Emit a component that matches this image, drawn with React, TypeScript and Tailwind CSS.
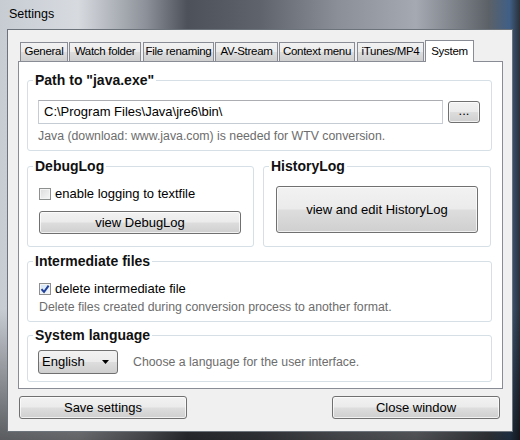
import type { ReactNode } from "react";

const FONT = { fontFamily: '"Liberation Sans", Arial, sans-serif' };

const tabs = [
  { label: "General", width: "w-[48px]", gap: "ml-[2px]" },
  { label: "Watch folder", width: "w-[72px]", gap: "ml-[1px]" },
  { label: "File renaming", width: "w-[71px]", gap: "ml-[2px]" },
  { label: "AV-Stream", width: "w-[63px]", gap: "ml-[1px]" },
  { label: "Context menu", width: "w-[76px]", gap: "ml-[1px]" },
  { label: "iTunes/MP4", width: "w-[67px]", gap: "ml-[2px]" },
];

function GroupBox({
  title,
  className,
  children,
}: {
  title: string;
  className: string;
  children: ReactNode;
}) {
  return (
    <fieldset className={`rounded-[3px] border border-[#d5dfe5] ${className}`}>
      <legend className="ml-[5px] px-[2px] text-[14px] font-bold leading-[16px] text-[#111]">
        {title}
      </legend>
      {children}
    </fieldset>
  );
}

function Button({ className, children }: { className: string; children: ReactNode }) {
  return (
    <button
      type="button"
      className={`flex items-center justify-center rounded-[3px] border border-[#707070] bg-[linear-gradient(180deg,#f2f2f2_0%,#ebebeb_48%,#dddddd_52%,#cfcfcf_100%)] text-[13px] leading-[15px] text-black shadow-[inset_0_0_0_1px_rgba(255,255,255,0.7)] ${className}`}
    >
      {children}
    </button>
  );
}

function CheckBox({ checked }: { checked: boolean }) {
  return (
    <span
      className={`flex h-[12px] w-[12px] items-center justify-center border border-[#8e8f8f] shadow-[inset_0_0_0_1px_#f4f4f4] ${
        checked
          ? "bg-[linear-gradient(135deg,#cfe3f6_0%,#f4f9fe_100%)]"
          : "bg-[linear-gradient(135deg,#dcdcdc_0%,#f6f6f6_100%)]"
      }`}
    >
      {checked ? (
        <svg width="10" height="10" viewBox="0 0 10 10">
          <path d="M1.5 5.2 L4 8 L8.6 1.6" fill="none" stroke="#21409a" strokeWidth="2" />
        </svg>
      ) : null}
    </span>
  );
}

export default function App() {
  return (
    <div
      className="relative h-[440px] w-[520px] overflow-hidden bg-[linear-gradient(180deg,rgba(0,0,0,0)_70%,rgba(0,0,0,0.55)_100%),linear-gradient(90deg,#c7ccd3_0%,#d7dbe0_15%,#8d9199_28%,#4d5159_36%,#5e636c_50%,#8b9098_65%,#a5aab2_80%,#5c6168_94%,#3f5f86_98%,#2a3038_100%)]"
      style={FONT}
    >
      <div className="flex h-[29px] items-center pl-[9px] text-[12.5px] text-black">Settings</div>
      <div className="ml-[7px] h-[403px] w-[506px] border border-[#6d737b] bg-[#f0f0f0]">
        <div className="pl-[10px] pt-[10px]">
          <div className="flex h-[21px] items-end">
            {tabs.map((tab) => (
              <div
                key={tab.label}
                className={`flex h-[19px] items-center justify-center border border-b-0 border-[#898c95] bg-[linear-gradient(180deg,#f2f2f2_0%,#ebebeb_50%,#dddddd_50%,#cfcfcf_100%)] text-[11.5px] tracking-[-0.3px] text-black ${tab.width} ${tab.gap}`}
              >
                {tab.label}
              </div>
            ))}
            <div className="relative z-10 -mb-px ml-[1px] flex h-[22px] w-[49px] items-start justify-center border border-b-0 border-[#898c95] bg-white pt-[2px] text-[11.5px] tracking-[-0.3px] text-black">
              System
            </div>
          </div>
          <div className="h-[328px] w-[485px] border border-[#898c95] bg-white pl-[8px] pt-[10px]">
            <GroupBox title={'Path to "java.exe"'} className="h-[79px] w-[465px]">
              <div className="pl-[10px] pt-[12px]">
                <div className="flex items-center">
                  <div className="flex h-[24px] w-[405px] items-center border border-[#c5ccd4] border-t-[#abadb3] pl-[5px] text-[13px] text-black">
                    C:\Program Files\Java\jre6\bin\
                  </div>
                  <Button className="ml-[5px] h-[22px] w-[32px] pb-[3px] text-[#333]">...</Button>
                </div>
                <div className="mt-[5px] text-[12.3px] leading-[15px] text-[#6d6d6d]">
                  Java (download: www.java.com) is needed for WTV conversion.
                </div>
              </div>
            </GroupBox>

            <div className="mt-[7px] flex">
              <GroupBox title="DebugLog" className="h-[89px] w-[227px]">
                <div className="pl-[11px] pt-[12px]">
                  <label className="flex h-[15px] items-center gap-[4px] text-[13px] text-black">
                    <CheckBox checked={false} />
                    enable logging to textfile
                  </label>
                  <Button className="mt-[10px] h-[23px] w-[202px]">view DebugLog</Button>
                </div>
              </GroupBox>
              <GroupBox title="HistoryLog" className="ml-[9px] h-[89px] w-[228px]">
                <div className="pl-[12px] pt-[12px]">
                  <Button className="h-[47px] w-[202px]">view and edit HistoryLog</Button>
                </div>
              </GroupBox>
            </div>

            <GroupBox title="Intermediate files" className="mt-[6px] h-[69px] w-[465px]">
              <div className="pl-[11px] pt-[12px]">
                <label className="flex h-[15px] items-center gap-[4px] text-[13px] text-black">
                  <CheckBox checked={true} />
                  delete intermediate file
                </label>
                <div className="mt-[4px] text-[12.3px] leading-[15px] text-[#6d6d6d]">
                  Delete files created during conversion process to another format.
                </div>
              </div>
            </GroupBox>

            <GroupBox title="System language" className="mt-[5px] h-[55px] w-[465px]">
              <div className="flex items-center pl-[10px] pt-[7px]">
                <div className="flex h-[24px] w-[80px] items-center justify-between rounded-[3px] border border-[#707070] bg-[linear-gradient(180deg,#f2f2f2_0%,#ebebeb_48%,#dddddd_52%,#cfcfcf_100%)] pl-[3px] pr-[8px] text-[13px] text-black">
                  English
                  <svg width="7" height="4" viewBox="0 0 7 4">
                    <path d="M0 0 H7 L3.5 4 Z" fill="#000" />
                  </svg>
                </div>
                <div className="ml-[15px] text-[12.3px] text-[#6d6d6d]">
                  Choose a language for the user interface.
                </div>
              </div>
            </GroupBox>
          </div>
        </div>
        <div className="ml-[11px] mt-[7px] flex w-[481px] justify-between">
          <Button className="h-[23px] w-[168px]">Save settings</Button>
          <Button className="h-[23px] w-[168px]">Close window</Button>
        </div>
      </div>
    </div>
  );
}
